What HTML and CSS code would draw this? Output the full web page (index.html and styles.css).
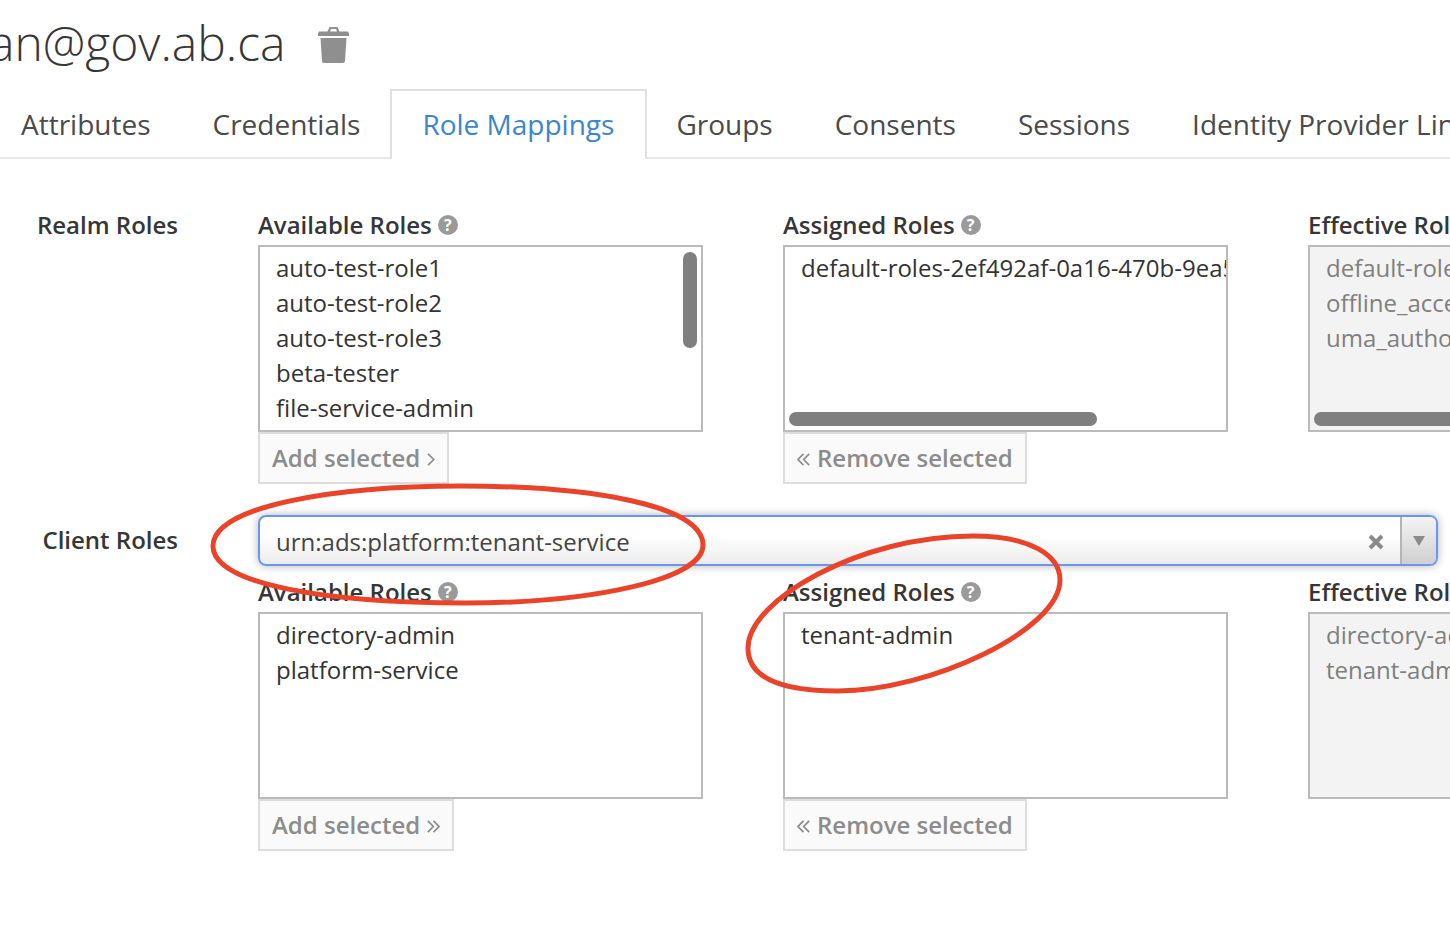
FILE: index.html
```html
<!DOCTYPE html>
<html lang="en">
<head>
    <meta charset="UTF-8">
    <title>Role Mappings</title>
    <link rel="stylesheet" href="styles.css">
</head>
<body>
    <div class="page-title">
        <h1>an@gov.ab.ca</h1>
        <svg class="trash" viewBox="0 0 31 37">
            <path d="M0 7.5 L1 5.5 H9.5 L11.5 1 H19.5 L21.5 5.5 H30 L31 7.5 V10 H0 Z M12 5.5 H19 L18 3 H13 Z" fill-rule="evenodd"/>
            <path d="M2.5 12 H28.5 L27 35 Q26.9 37 25 37 H6 Q4.1 37 4 35 Z"/>
        </svg>
    </div>

    <ul class="tabs">
        <li>Attributes</li>
        <li>Credentials</li>
        <li class="active">Role Mappings</li>
        <li>Groups</li>
        <li>Consents</li>
        <li>Sessions</li>
        <li>Identity Provider Links</li>
    </ul>

    <section class="role-row first">
        <div class="row-label">Realm Roles</div>
        <div class="row-body">
            <div class="role-cols">
                <div class="role-col">
                    <div class="col-head">Available Roles <span class="help">?</span></div>
                    <div class="list-box">
                        <div>auto-test-role1</div>
                        <div>auto-test-role2</div>
                        <div>auto-test-role3</div>
                        <div>beta-tester</div>
                        <div>file-service-admin</div>
                        <span class="scroll-v"></span>
                    </div>
                    <button class="btn">Add selected
                        <svg class="angle" viewBox="0 0 8 13"><path d="M1 .8 L6.8 6.5 L1 12.2"/></svg>
                    </button>
                </div>
                <div class="role-col">
                    <div class="col-head">Assigned Roles <span class="help">?</span></div>
                    <div class="list-box">
                        <div>default-roles-2ef492af-0a16-470b-9ea5-5c1b</div>
                        <span class="scroll-h"></span>
                    </div>
                    <button class="btn">
                        <svg class="angle double" viewBox="0 0 13 13"><path d="M6.5 .8 L1 6.5 L6.5 12.2 M12.2 .8 L6.7 6.5 L12.2 12.2"/></svg>
                        Remove selected</button>
                </div>
                <div class="role-col">
                    <div class="col-head">Effective Roles <span class="help">?</span></div>
                    <div class="list-box readonly">
                        <div>default-roles-2ef492af</div>
                        <div>offline_access</div>
                        <div>uma_authorization</div>
                        <span class="scroll-h wide"></span>
                    </div>
                </div>
            </div>
        </div>
    </section>

    <section class="role-row second">
        <div class="row-label client">Client Roles</div>
        <div class="row-body">
            <div class="client-select">
                <span class="select-value">urn:ads:platform:tenant-service</span>
                <svg class="select-clear" viewBox="0 0 16 16"><path d="M2 2 L14 14 M14 2 L2 14"/></svg>
                <span class="select-arrow"></span>
            </div>
            <div class="role-cols">
                <div class="role-col">
                    <div class="col-head">Available Roles <span class="help">?</span></div>
                    <div class="list-box">
                        <div>directory-admin</div>
                        <div>platform-service</div>
                    </div>
                    <button class="btn">Add selected
                        <svg class="angle double" viewBox="0 0 13 13"><path d="M.8 .8 L6.3 6.5 L.8 12.2 M6.5 .8 L12 6.5 L6.5 12.2"/></svg>
                    </button>
                </div>
                <div class="role-col">
                    <div class="col-head">Assigned Roles <span class="help">?</span></div>
                    <div class="list-box">
                        <div>tenant-admin</div>
                    </div>
                    <button class="btn">
                        <svg class="angle double" viewBox="0 0 13 13"><path d="M6.5 .8 L1 6.5 L6.5 12.2 M12.2 .8 L6.7 6.5 L12.2 12.2"/></svg>
                        Remove selected</button>
                </div>
                <div class="role-col">
                    <div class="col-head">Effective Roles <span class="help">?</span></div>
                    <div class="list-box readonly">
                        <div>directory-admin</div>
                        <div>tenant-admin</div>
                    </div>
                </div>
            </div>
        </div>
    </section>

    <!-- hand drawn circles on top of the screenshot -->
    <svg class="marks" viewBox="0 0 1450 938">
        <path d="M213 546 C213 505 340 486 460 486 C590 486 703 505 703 545 C703 580 590 603 465 603 C330 603 213 585 213 546 Z"/>
        <path d="M748 648 C748 600 860 536 973 536 C1030 536 1060 555 1060 580 C1060 630 930 691 838 691 C785 691 748 680 748 648 Z"/>
    </svg>
</body>
</html>
```

FILE: styles.css
```css
* {
    margin: 0;
    padding: 0;
    box-sizing: border-box;
    font-family: "Open Sans", sans-serif;
}

html, body {
    width: 1450px;
    height: 938px;
    overflow: hidden;
}

body {
    position: relative;
    background: #fff;
    color: #363636;
}

.page-title {
    height: 89px;
    display: flex;
    align-items: flex-start;
    padding-top: 9px;
}

.page-title h1 {
    font-size: 48px;
    font-weight: 300;
    line-height: 68px;
    margin-left: -11px;
}

.trash {
    width: 31px;
    height: 37px;
    margin: 17px 0 0 32px;
    fill: #8f8f8f;
}

.tabs {
    list-style: none;
    display: flex;
    height: 70px;
    border-bottom: 2px solid #e8e8e8;
    margin-left: -10px;
    white-space: nowrap;
}

.tabs li {
    height: 70px;
    padding: 0 29px;
    border: 2px solid transparent;
    border-bottom: 0;
    font-size: 28px;
    line-height: 66px;
    color: #4a4a4a;
}

.tabs li.active {
    margin: 0 -2px 0 -1px;
    padding: 0 31px 0 30px;
    color: #3b86cb;
    background: #fff;
    border-color: #e0e0e0;
}

.role-row {
    display: grid;
    grid-template-columns: 178px 1180px;
    column-gap: 80px;
}

.role-row.first {
    padding-top: 50px;
}

.role-row.second {
    padding-top: 31px;
}

.row-label {
    text-align: right;
    font-size: 24px;
    font-weight: 600;
    line-height: 32px;
}

.row-label.client {
    padding-top: 9px;
}

.client-select {
    height: 51px;
    display: flex;
    align-items: center;
    border: 2px solid #6a97ee;
    border-radius: 8px;
    background: linear-gradient(#fff 40%, #ececec);
    box-shadow: 0 0 8px rgba(0, 0, 0, 0.3);
    margin-bottom: 10px;
    font-size: 24px;
    color: #444;
    overflow: hidden;
}

.select-value {
    flex: 1;
    padding: 2px 0 0 16px;
}

.select-clear {
    width: 16px;
    height: 16px;
    margin: 3px 16px 0 0;
    fill: none;
    stroke: #8a8a8a;
    stroke-width: 4;
}

.select-arrow {
    width: 36px;
    height: 100%;
    display: flex;
    justify-content: center;
    align-items: center;
    border-left: 2px solid #b5b5b5;
    background: linear-gradient(#f4f4f4, #cfcfcf);
}

.select-arrow::after {
    content: "";
    border-left: 6px solid transparent;
    border-right: 6px solid transparent;
    border-top: 10px solid #8a8a8a;
}

.role-cols {
    display: flex;
    gap: 80px;
}

.role-col {
    width: 445px;
    flex-shrink: 0;
}

.col-head {
    display: flex;
    align-items: center;
    gap: 6px;
    height: 36px;
    padding-bottom: 6px;
    font-size: 24px;
    font-weight: 600;
    white-space: nowrap;
}

.help {
    width: 20px;
    height: 20px;
    margin-top: 2px;
    border-radius: 50%;
    background: #9a9a9a;
    color: #fff;
    font-size: 16px;
    font-weight: 700;
    line-height: 20px;
    text-align: center;
}

.list-box {
    position: relative;
    height: 187px;
    padding: 3px 16px;
    border: 2px solid #bbb;
    background: #fff;
    font-size: 24px;
    line-height: 35px;
    white-space: nowrap;
    overflow: hidden;
    color: #333;
}

.list-box.readonly {
    background: #f3f3f3;
    color: #7f7f7f;
}

.scroll-v {
    position: absolute;
    top: 5px;
    right: 4px;
    width: 14px;
    height: 96px;
    border-radius: 7px;
    background: #7f7f7f;
}

.scroll-h {
    position: absolute;
    left: 4px;
    bottom: 4px;
    width: 308px;
    height: 14px;
    border-radius: 7px;
    background: #7f7f7f;
}

.scroll-h.wide {
    width: 400px;
}

.btn {
    display: inline-flex;
    align-items: center;
    gap: 7px;
    height: 52px;
    padding: 0 12px 2px;
    border: 2px solid #ddd;
    background: #fafafa;
    color: #8c8c8c;
    font-size: 24px;
    font-weight: 600;
    white-space: nowrap;
}

.angle {
    width: 8px;
    height: 13px;
    margin-top: 4px;
    fill: none;
    stroke: #8c8c8c;
    stroke-width: 1.7;
}

.angle.double {
    width: 13px;
}

.marks {
    position: absolute;
    left: 0;
    top: 0;
    width: 1450px;
    height: 938px;
    fill: none;
    stroke: #e9432a;
    stroke-width: 5;
    pointer-events: none;
}
```
